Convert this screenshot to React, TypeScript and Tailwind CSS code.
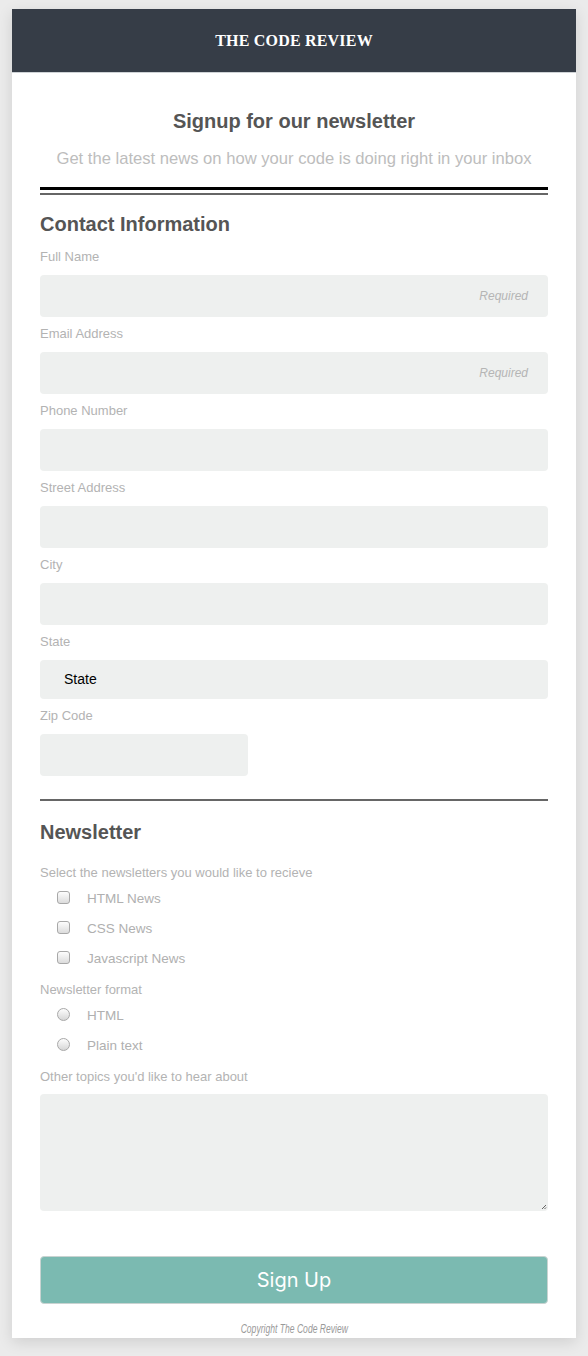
import React from "react";

const sans = { fontFamily: '"Liberation Sans", Arial, sans-serif' };

function Field({ label, required, narrow, mt = "mt-[9px]" }: { label: string; required?: boolean; narrow?: boolean; mt?: string }) {
  return (
    <div>
      <div className={`${mt} text-[13px] leading-[16px] text-[#b3b3b3]`}>{label}</div>
      <div
        className={`mt-[10px] h-[42px] rounded-[4px] bg-[#eef0ef] flex items-center justify-end pr-[20px] ${narrow ? "w-[208px]" : "w-full"}`}
      >
        {required && <span className="text-[12px] italic text-[#b5b5b5]">Required</span>}
      </div>
    </div>
  );
}

function Check({ label }: { label: string }) {
  return (
    <div className="h-[30px] flex items-center pl-[17px]">
      <span className="w-[13px] h-[13px] rounded-[3px] border border-[#a8a8a8] bg-gradient-to-b from-[#fdfdfd] to-[#dcdcdc] -mt-[4px]" />
      <span className="ml-[17px] text-[13.5px] text-[#b0b0b0]">{label}</span>
    </div>
  );
}

function Radio({ label }: { label: string }) {
  return (
    <div className="h-[30px] flex items-center pl-[17px]">
      <span className="w-[13px] h-[13px] rounded-full border border-[#a8a8a8] bg-gradient-to-b from-[#fdfdfd] to-[#d6d6d6] -mt-[4px]" />
      <span className="ml-[17px] text-[13.5px] text-[#b0b0b0]">{label}</span>
    </div>
  );
}

export default function App() {
  return (
    <div className="min-h-[1356px] bg-[#ebebeb] pt-[9px] pb-[18px] px-[12px]" style={sans}>
      <div className="bg-white shadow-[0_4px_14px_rgba(0,0,0,0.12)]">
        <div className="h-[64px] bg-[#363d47] flex items-center justify-center border-b border-[#cfd3d6]">
          <span
            className="text-white text-[16px] font-bold tracking-[0.2px]"
            style={{ fontFamily: '"Liberation Serif", "Times New Roman", serif' }}
          >
            THE CODE REVIEW
          </span>
        </div>
        <div className="px-[28px] pb-[2px]">
          <h1 className="pt-[37px] text-center text-[20px] leading-[22px] font-bold text-[#555555]">
            Signup for our newsletter
          </h1>
          <p className="mt-[17px] text-center text-[16.6px] leading-[20px] text-[#bdbdbd]">
            Get the latest news on how your code is doing right in your inbox
          </p>
          <div className="mt-[18px] h-[3px] bg-black" />
          <div className="mt-[3px] h-[2px] bg-[#666666]" />
          <h2 className="mt-[17px] text-[20px] leading-[24px] font-bold text-[#555555]">Contact Information</h2>
          <Field label="Full Name" required mt="mt-[13px]" />
          <Field label="Email Address" required />
          <Field label="Phone Number" />
          <Field label="Street Address" />
          <Field label="City" />
          <div>
            <div className="mt-[9px] text-[13px] leading-[16px] text-[#b3b3b3]">State</div>
            <div className="mt-[10px] h-[39px] rounded-[4px] bg-[#eef0ef] flex items-center pl-[24px]">
              <span className="text-[14px] text-black">State</span>
            </div>
          </div>
          <Field label="Zip Code" narrow />
          <div className="mt-[23px] h-[2px] bg-[#666666]" />
          <h2 className="mt-[19px] text-[20px] leading-[24px] font-bold text-[#555555]">Newsletter</h2>
          <div className="mt-[21px] text-[13px] leading-[16px] text-[#b3b3b3]">
            Select the newsletters you would like to recieve
          </div>
          <div className="mt-[3px]">
            <Check label="HTML News" />
            <Check label="CSS News" />
            <Check label="Javascript News" />
          </div>
          <div className="mt-[8px] text-[13px] leading-[16px] text-[#b3b3b3]">Newsletter format</div>
          <div className="mt-[3px]">
            <Radio label="HTML" />
            <Radio label="Plain text" />
          </div>
          <div className="mt-[8px] text-[13px] leading-[16px] text-[#b3b3b3]">Other topics you'd like to hear about</div>
          <div className="relative mt-[9px] h-[117px] rounded-[4px] bg-[#eef0ef]">
            <svg className="absolute right-[1px] bottom-[1px]" width="6" height="6" viewBox="0 0 6 6">
              <path d="M5 1 L1 5 M5 3.5 L3.5 5" stroke="#555" strokeWidth="0.9" />
            </svg>
          </div>
          <button
            className="mt-[45px] w-full h-[48px] rounded-[4px] bg-[#7bbab1] border border-[#c9d3d1] text-white text-[20px] flex items-center justify-center"
            style={{ fontFamily: 'Inter, "Liberation Sans", sans-serif' }}
          >
            Sign Up
          </button>
          <div
            className="mt-[18px] text-center text-[13px] leading-[14px] italic text-[#9a9a9a]"
            style={{ fontFamily: '"Liberation Sans Narrow", "Liberation Sans", sans-serif' }}
          >
            <span className="inline-block scale-x-[0.66]">Copyright The Code Review</span>
          </div>
        </div>
      </div>
    </div>
  );
}
